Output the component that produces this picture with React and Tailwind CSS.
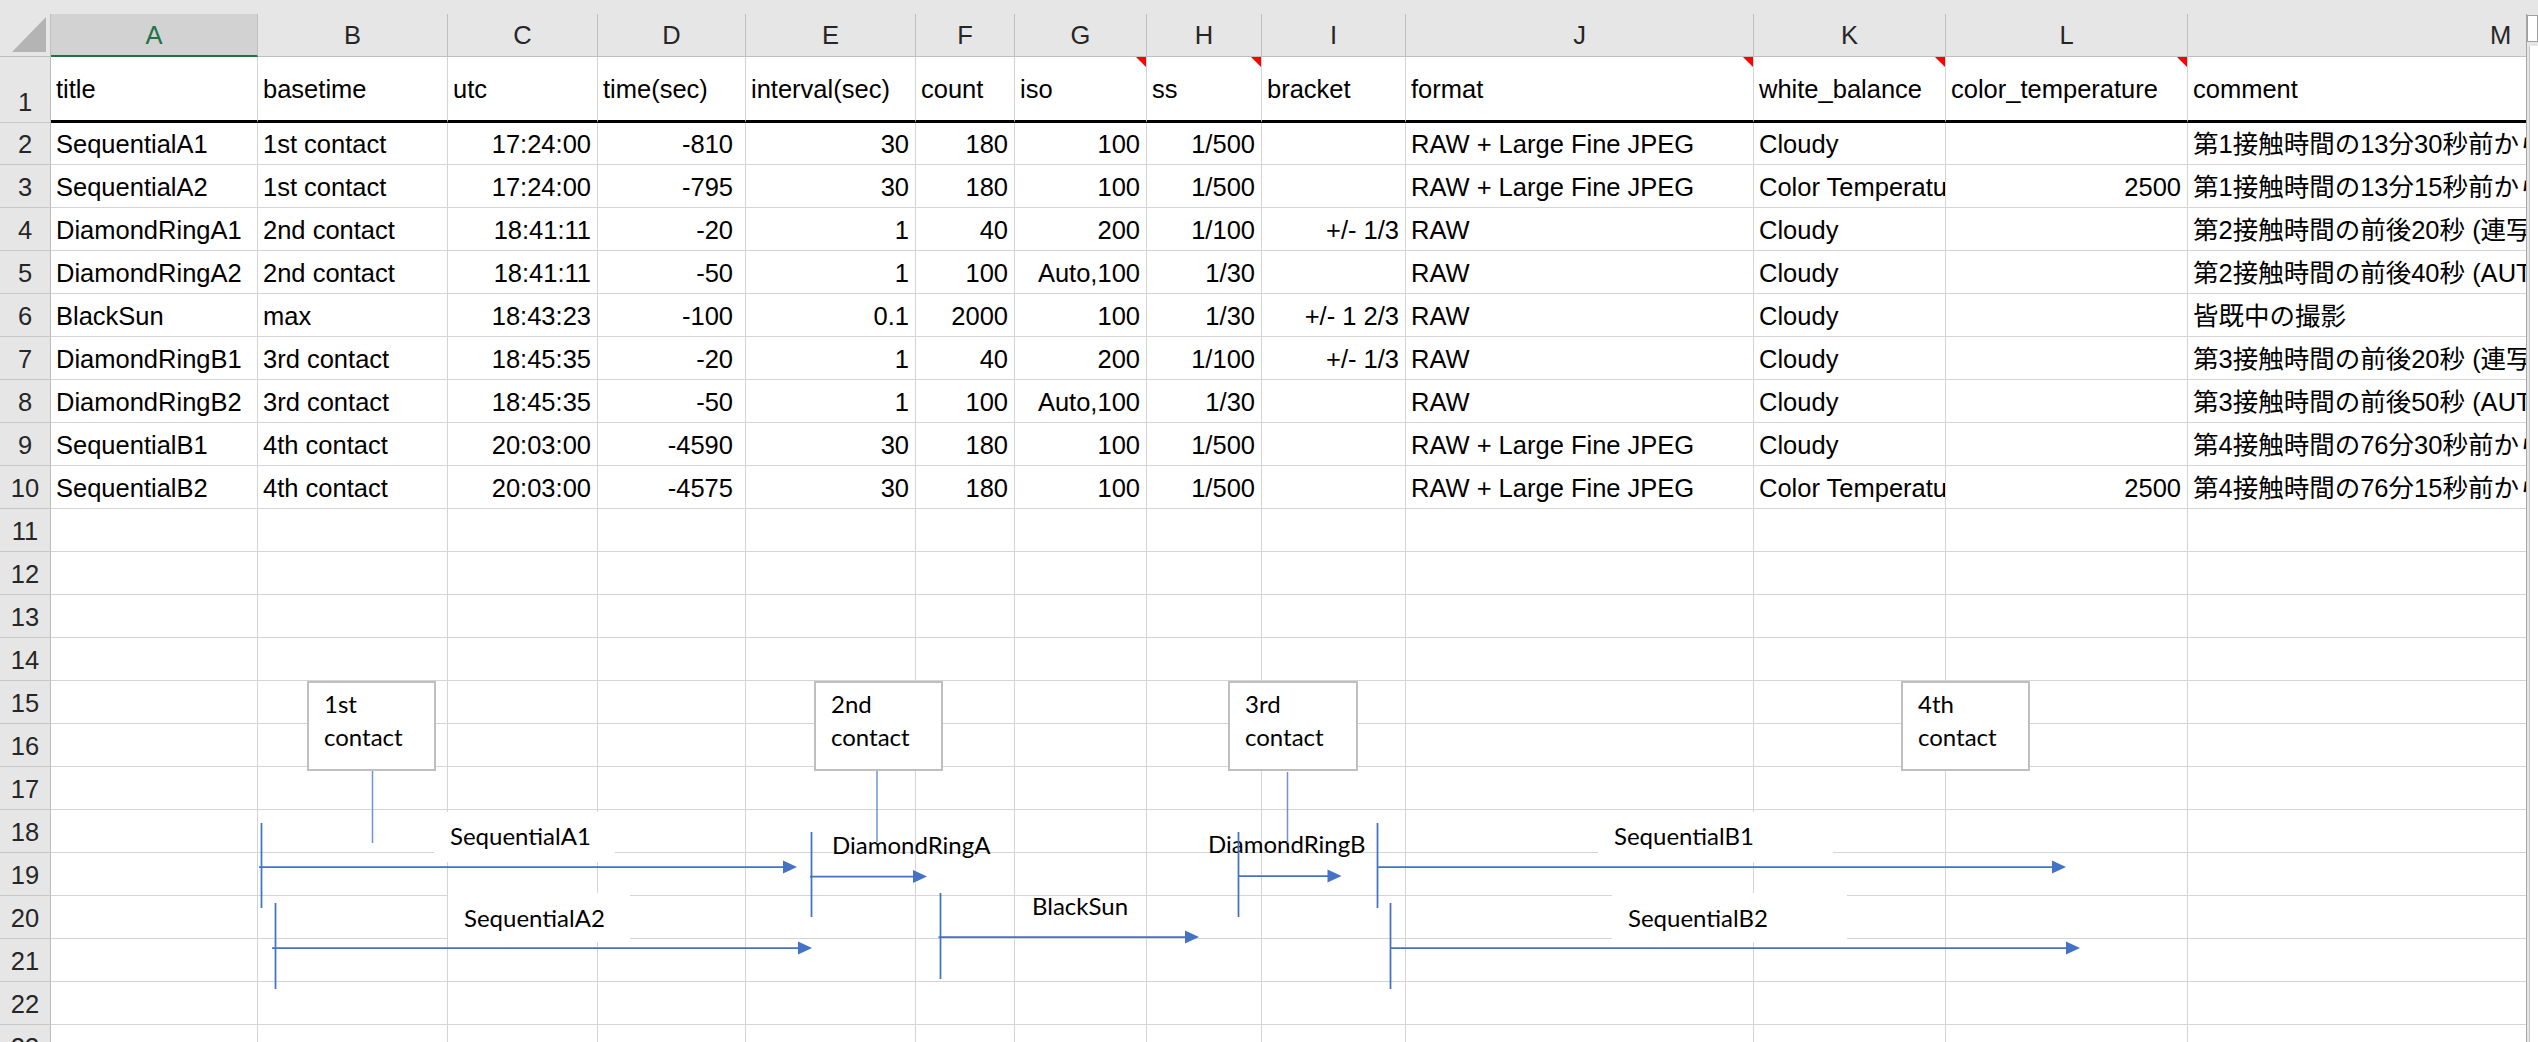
import React from "react";

const COLW = [
  "w-[207px]",
  "w-[190px]",
  "w-[150px]",
  "w-[148px]",
  "w-[170px]",
  "w-[99px]",
  "w-[132px]",
  "w-[115px]",
  "w-[144px]",
  "w-[348px]",
  "w-[192px]",
  "w-[242px]",
  "w-[626px]",
];
const LETTERS = ["A", "B", "C", "D", "E", "F", "G", "H", "I", "J", "K", "L", "M"];
const HEAD = [
  "title",
  "basetime",
  "utc",
  "time(sec)",
  "interval(sec)",
  "count",
  "iso",
  "ss",
  "bracket",
  "format",
  "white_balance",
  "color_temperature",
  "comment",
];
const NOTE = [false, false, false, false, false, false, true, true, false, true, true, true, false];
const RIGHT = [false, false, true, true, true, true, true, true, true, false, false, true, false];

const DATA = [
  ["SequentialA1", "1st contact", "17:24:00", "-810", "30", "180", "100", "1/500", "", "RAW + Large Fine JPEG", "Cloudy", "", "第1接触時間の13分30秒前から30秒間隔で撮影"],
  ["SequentialA2", "1st contact", "17:24:00", "-795", "30", "180", "100", "1/500", "", "RAW + Large Fine JPEG", "Color Temperature", "2500", "第1接触時間の13分15秒前から30秒間隔で撮影"],
  ["DiamondRingA1", "2nd contact", "18:41:11", "-20", "1", "40", "200", "1/100", "+/- 1/3", "RAW", "Cloudy", "", "第2接触時間の前後20秒 (連写モード)"],
  ["DiamondRingA2", "2nd contact", "18:41:11", "-50", "1", "100", "Auto,100", "1/30", "", "RAW", "Cloudy", "", "第2接触時間の前後40秒 (AUTO ISO)"],
  ["BlackSun", "max", "18:43:23", "-100", "0.1", "2000", "100", "1/30", "+/- 1 2/3", "RAW", "Cloudy", "", "皆既中の撮影"],
  ["DiamondRingB1", "3rd contact", "18:45:35", "-20", "1", "40", "200", "1/100", "+/- 1/3", "RAW", "Cloudy", "", "第3接触時間の前後20秒 (連写モード)"],
  ["DiamondRingB2", "3rd contact", "18:45:35", "-50", "1", "100", "Auto,100", "1/30", "", "RAW", "Cloudy", "", "第3接触時間の前後50秒 (AUTO ISO)"],
  ["SequentialB1", "4th contact", "20:03:00", "-4590", "30", "180", "100", "1/500", "", "RAW + Large Fine JPEG", "Cloudy", "", "第4接触時間の76分30秒前から30秒間隔で撮影"],
  ["SequentialB2", "4th contact", "20:03:00", "-4575", "30", "180", "100", "1/500", "", "RAW + Large Fine JPEG", "Color Temperature", "2500", "第4接触時間の76分15秒前から30秒間隔で撮影"],
];

const EMPTY = Array(13).fill("");

function RowHead({ n, tall }) {
  return (
    <div
      className={`w-[51px] shrink-0 h-full bg-[#e6e6e6] border-r border-b border-r-[#bdbdbd] border-b-[#c8c8c8] flex items-end justify-center pb-[5px] text-[#262626] ${
        tall ? "" : ""
      }`}
    >
      {n}
    </div>
  );
}

function Cell({ i, v, right }) {
  const align = right
    ? i === 3
      ? "justify-end pr-[12px]"
      : "justify-end pr-[6px]"
    : "pl-[5px]";
  return (
    <div
      className={`${COLW[i]} shrink-0 h-full border-r border-b border-[#d4d4d4] flex items-end pb-[5px] overflow-hidden whitespace-nowrap ${align}`}
    >
      {v}
    </div>
  );
}

function Triangle() {
  return (
    <svg className="absolute top-0 right-0" width="10" height="10" viewBox="0 0 10 10">
      <polygon points="0,0 10,0 10,10" fill="#ff0000" />
    </svg>
  );
}

function Grid() {
  const emptyRows = [];
  for (let n = 11; n <= 23; n++) emptyRows.push(n);
  return (
    <div className="w-[2527px] h-full overflow-hidden border-r border-[#a6a6a6] bg-white">
      {/* column header row */}
      <div className="flex h-[43px] bg-[#e6e6e6]">
        <div className="w-[51px] shrink-0 h-full border-r border-b border-[#bfbfbf] relative flex items-end justify-end pr-[3px] pb-[3px]">
          <svg width="35" height="36" viewBox="0 0 35 36">
            <polygon points="34,0 34,35 0,35" fill="#b4b4b4" />
          </svg>
        </div>
        {LETTERS.map((l, i) =>
          i === 0 ? (
            <div
              key={l}
              className={`${COLW[i]} shrink-0 h-full bg-[#d2d2d2] border-r border-r-[#bfbfbf] border-b-2 border-b-[#217346] flex items-center justify-center text-[#217346]`}
            >
              {l}
            </div>
          ) : (
            <div
              key={l}
              className={`${COLW[i]} shrink-0 h-full border-r border-b border-[#bfbfbf] flex items-center justify-center text-[#262626]`}
            >
              {l}
            </div>
          )
        )}
      </div>
      {/* row 1 */}
      <div className="flex h-[66px]">
        <RowHead n={1} />
        {HEAD.map((h, i) => (
          <div
            key={h}
            className={`${COLW[i]} shrink-0 h-full relative border-r border-r-[#d4d4d4] border-b-[3px] border-b-black flex items-center pl-[5px] whitespace-nowrap overflow-hidden`}
          >
            {h}
            {NOTE[i] && <Triangle />}
          </div>
        ))}
      </div>
      {/* data rows */}
      {DATA.map((row, r) => (
        <div key={r} className={r === 0 ? "flex h-[42px]" : "flex h-[43px]"}>
          <RowHead n={r + 2} />
          {row.map((v, i) => (
            <Cell key={i} i={i} v={v} right={RIGHT[i]} />
          ))}
        </div>
      ))}
      {emptyRows.map((n) => (
        <div key={n} className="flex h-[43px]">
          <RowHead n={n} />
          {EMPTY.map((v, i) => (
            <Cell key={i} i={i} v={v} right={false} />
          ))}
        </div>
      ))}
    </div>
  );
}

function Diagram() {
  const blue = "#4472c4";
  const ticks = [
    [261.5, 823, 908],
    [275.5, 903, 989],
    [811.5, 832, 917],
    [940.5, 893, 979],
    [1238.5, 832, 917],
    [1377.5, 823, 908],
    [1390.5, 903, 989],
  ];
  const connectors = [
    [372.5, 771, 843],
    [877, 771, 842],
    [1287.5, 772, 843],
  ];
  const arrows = [
    [259, 797, 867],
    [272, 812, 948],
    [810, 927, 876.5],
    [938.5, 1199, 937],
    [1238, 1341.5, 876],
    [1377, 2066, 867],
    [1391, 2080, 948],
  ];
  const boxBase =
    "absolute top-[681px] h-[90px] bg-white border-2 border-[#bfbfbf] pl-[15px] pt-[4px] text-[24px] leading-[33px] text-black font-['Lato',sans-serif]";
  const labelBase =
    "absolute bg-white pl-[16px] text-[24px] leading-[33px] text-black whitespace-nowrap font-['Lato',sans-serif]";
  const freeLabel =
    "absolute text-[24px] leading-[33px] text-black whitespace-nowrap font-['Lato',sans-serif]";
  return (
    <div className="absolute left-0 top-0 w-[2527px] h-[1042px] overflow-hidden pointer-events-none">
      <div className={`${boxBase} left-[307px] w-[129px]`}>
        1st
        <br />
        contact
      </div>
      <div className={`${boxBase} left-[814px] w-[129px]`}>
        2nd
        <br />
        contact
      </div>
      <div className={`${boxBase} left-[1228px] w-[130px]`}>
        3rd
        <br />
        contact
      </div>
      <div className={`${boxBase} left-[1901px] w-[129px]`}>
        4th
        <br />
        contact
      </div>

      <div className={`${labelBase} left-[434px] top-[812px] w-[181px] h-[50px] pt-[7px]`}>SequentialA1</div>
      <div className={`${labelBase} left-[448px] top-[893px] w-[182px] h-[49px] pt-[8px]`}>SequentialA2</div>
      <div className={`${labelBase} left-[1598px] top-[812px] w-[235px] h-[50px] pt-[7px]`}>SequentialB1</div>
      <div className={`${labelBase} left-[1612px] top-[893px] w-[235px] h-[49px] pt-[8px]`}>SequentialB2</div>

      <div className={`${freeLabel} left-[832px] top-[828px]`}>DiamondRingA</div>
      <div className={`${freeLabel} left-[1208px] top-[827px]`}>DiamondRingB</div>
      <div className={`${freeLabel} left-[1032px] top-[889px]`}>BlackSun</div>

      <svg className="absolute left-0 top-0" width="2527" height="1042">
        {connectors.map(([x, y1, y2], k) => (
          <line key={"c" + k} x1={x} y1={y1} x2={x} y2={y2} stroke="#6f93d6" strokeWidth="1.5" />
        ))}
        {ticks.map(([x, y1, y2], k) => (
          <line key={"t" + k} x1={x} y1={y1} x2={x} y2={y2} stroke={blue} strokeWidth="1.75" />
        ))}
        {arrows.map(([x1, tip, y], k) => (
          <g key={"a" + k}>
            <line x1={x1} y1={y} x2={tip - 12} y2={y} stroke={blue} strokeWidth="1.75" />
            <polygon points={`${tip - 14},${y - 6.5} ${tip},${y} ${tip - 14},${y + 6.5}`} fill={blue} />
          </g>
        ))}
      </svg>
    </div>
  );
}

export default function App() {
  return (
    <div className="relative w-[2538px] h-[1042px] overflow-hidden bg-[#e6e6e6] text-black text-[25.5px] leading-[30px] font-['Liberation_Sans','Noto_Sans_CJK_JP',sans-serif]">
      <div className="h-[14px] bg-[#e6e6e6]" />
      <div className="flex h-[1028px]">
        <Grid />
        <div className="w-[11px] shrink-0 h-full flex flex-col bg-[#e6e6e6] pt-[1px]">
          <div className="h-[27px] bg-white border border-[#a0a0a0]" />
          <div className="flex-1 bg-white border-l border-[#c8c8c8] ml-[2px] mt-[4px]" />
        </div>
      </div>
      <Diagram />
    </div>
  );
}
